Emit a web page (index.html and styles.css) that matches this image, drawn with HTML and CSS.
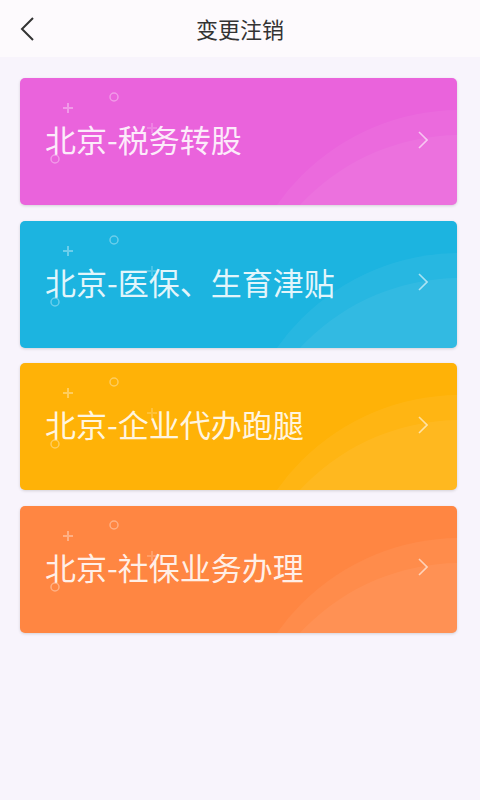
FILE: index.html
```html
<!DOCTYPE html>
<html lang="zh">
<head>
<meta charset="utf-8">
<link rel="stylesheet" href="styles.css">
</head>
<body>
<header class="bar">
  <svg class="back" width="16" height="26" viewBox="0 0 16 26"><path d="M14 2 L3 13 L14 24" fill="none" stroke="#333" stroke-width="2"/></svg>
  <div class="title">变更注销</div>
</header>
<main class="list">
  <div class="card c1">
    <svg class="deco" width="437" height="127" viewBox="0 0 437 127">
      <circle cx="440" cy="256" r="224" fill="rgba(255,255,255,0.05)"/>
      <circle cx="440" cy="275" r="218" fill="rgba(255,255,255,0.05)"/>
      <path d="M48 25 V35 M43 30 H53" stroke="rgba(255,255,255,0.35)" stroke-width="2"/>
      <path d="M132 45 V55 M127 50 H137" stroke="rgba(255,255,255,0.2)" stroke-width="2"/>
      <circle cx="94" cy="19" r="4" fill="none" stroke="rgba(255,255,255,0.35)" stroke-width="1.5"/>
      <circle cx="35" cy="81" r="4" fill="none" stroke="rgba(255,255,255,0.35)" stroke-width="1.5"/>
    </svg>
    <span class="label">北京-税务转股</span>
    <svg class="arrow" width="10" height="18" viewBox="0 0 10 18"><path d="M1 1 L9 9 L1 17" fill="none" stroke="rgba(255,255,255,0.6)" stroke-width="1.6"/></svg>
  </div>
  <div class="card c2">
    <svg class="deco" width="437" height="127" viewBox="0 0 437 127">
      <circle cx="440" cy="256" r="224" fill="rgba(255,255,255,0.05)"/>
      <circle cx="440" cy="275" r="218" fill="rgba(255,255,255,0.05)"/>
      <path d="M48 25 V35 M43 30 H53" stroke="rgba(255,255,255,0.35)" stroke-width="2"/>
      <path d="M132 45 V55 M127 50 H137" stroke="rgba(255,255,255,0.2)" stroke-width="2"/>
      <circle cx="94" cy="19" r="4" fill="none" stroke="rgba(255,255,255,0.35)" stroke-width="1.5"/>
      <circle cx="35" cy="81" r="4" fill="none" stroke="rgba(255,255,255,0.35)" stroke-width="1.5"/>
    </svg>
    <span class="label">北京-医保、生育津贴</span>
    <svg class="arrow" width="10" height="18" viewBox="0 0 10 18"><path d="M1 1 L9 9 L1 17" fill="none" stroke="rgba(255,255,255,0.6)" stroke-width="1.6"/></svg>
  </div>
  <div class="card c3">
    <svg class="deco" width="437" height="127" viewBox="0 0 437 127">
      <circle cx="440" cy="256" r="224" fill="rgba(255,255,255,0.05)"/>
      <circle cx="440" cy="275" r="218" fill="rgba(255,255,255,0.05)"/>
      <path d="M48 25 V35 M43 30 H53" stroke="rgba(255,255,255,0.35)" stroke-width="2"/>
      <path d="M132 45 V55 M127 50 H137" stroke="rgba(255,255,255,0.2)" stroke-width="2"/>
      <circle cx="94" cy="19" r="4" fill="none" stroke="rgba(255,255,255,0.35)" stroke-width="1.5"/>
      <circle cx="35" cy="81" r="4" fill="none" stroke="rgba(255,255,255,0.35)" stroke-width="1.5"/>
    </svg>
    <span class="label">北京-企业代办跑腿</span>
    <svg class="arrow" width="10" height="18" viewBox="0 0 10 18"><path d="M1 1 L9 9 L1 17" fill="none" stroke="rgba(255,255,255,0.6)" stroke-width="1.6"/></svg>
  </div>
  <div class="card c4">
    <svg class="deco" width="437" height="127" viewBox="0 0 437 127">
      <circle cx="440" cy="256" r="224" fill="rgba(255,255,255,0.05)"/>
      <circle cx="440" cy="275" r="218" fill="rgba(255,255,255,0.05)"/>
      <path d="M48 25 V35 M43 30 H53" stroke="rgba(255,255,255,0.35)" stroke-width="2"/>
      <path d="M132 45 V55 M127 50 H137" stroke="rgba(255,255,255,0.2)" stroke-width="2"/>
      <circle cx="94" cy="19" r="4" fill="none" stroke="rgba(255,255,255,0.35)" stroke-width="1.5"/>
      <circle cx="35" cy="81" r="4" fill="none" stroke="rgba(255,255,255,0.35)" stroke-width="1.5"/>
    </svg>
    <span class="label">北京-社保业务办理</span>
    <svg class="arrow" width="10" height="18" viewBox="0 0 10 18"><path d="M1 1 L9 9 L1 17" fill="none" stroke="rgba(255,255,255,0.6)" stroke-width="1.6"/></svg>
  </div>
</main>
</body>
</html>
```
FILE: styles.css
```css
html, body {
  margin: 0;
  padding: 0;
}
body {
  width: 480px;
  height: 800px;
  background: #f8f4fc;
  font-family: "Noto Sans CJK SC", "Noto Sans", sans-serif;
}
.bar {
  height: 57px;
  background: #fdfafd;
  display: flex;
  align-items: center;
  justify-content: center;
  position: relative;
}
.back {
  position: absolute;
  left: 19px;
  top: 16px;
}
.title {
  font-size: 22px;
  line-height: 1;
  color: #333;
  margin-top: -2px;
}
.list {
  padding: 21px 23px 0 20px;
  display: flex;
  flex-direction: column;
  gap: 15.5px;
}
.card {
  height: 127px;
  border-radius: 5px;
  position: relative;
  overflow: hidden;
  display: flex;
  align-items: center;
  padding: 0 29px 6px 25px;
  box-sizing: border-box;
  justify-content: space-between;
  box-shadow: 0 1px 3px rgba(0,0,0,0.15);
}
.deco {
  position: absolute;
  left: 0;
  top: 0;
}
.label {
  position: relative;
  font-size: 31px;
  line-height: 1;
  color: rgba(255,255,255,0.88);
}
.arrow {
  position: relative;
  margin-top: 2px;
}
.c1 { background: #ea63dc; }
.c2 { background: #1cb4e0; }
.c3 { background: #ffb207; }
.c4 { background: #ff8642; }
```
